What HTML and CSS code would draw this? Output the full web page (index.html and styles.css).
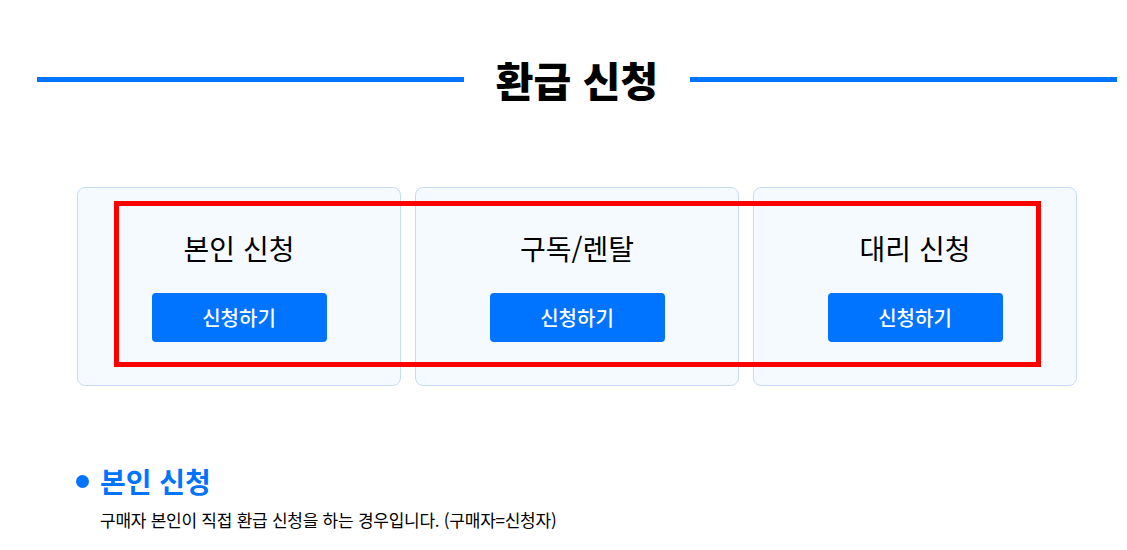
FILE: index.html
```html
<!DOCTYPE html>
<html lang="ko">
<head>
<meta charset="utf-8">
<title>환급 신청</title>
<link rel="stylesheet" href="styles.css">
</head>
<body>
<div class="page">
  <div class="title-row">
    <span class="title-line"></span>
    <h1 class="title">환급 신청</h1>
    <span class="title-line"></span>
  </div>

  <div class="cards">
    <div class="card">
      <div class="card-title">본인 신청</div>
      <button class="card-btn">신청하기</button>
    </div>
    <div class="card">
      <div class="card-title">구독/렌탈</div>
      <button class="card-btn">신청하기</button>
    </div>
    <div class="card">
      <div class="card-title">대리 신청</div>
      <button class="card-btn">신청하기</button>
    </div>
    <div class="highlight"></div>
  </div>

  <div class="section">
    <h2 class="section-title"><span class="dot"></span>본인 신청</h2>
    <p class="section-desc">구매자 본인이 직접 환급 신청을 하는 경우입니다. (구매자=신청자)</p>
  </div>
</div>
</body>
</html>
```

FILE: styles.css
```css
* { box-sizing: border-box; }
html, body { margin: 0; padding: 0; background: #ffffff; }
body {
  font-family: "Noto Sans CJK KR", "Noto Sans", sans-serif;
  color: #000;
}
.page {
  width: 1080px;
  margin-left: 37px;
  padding-top: 56px;
}
.title-row {
  display: flex;
  align-items: center;
  height: 46px;
}
.title-line {
  flex: 1;
  height: 5px;
  background: #0073ff;
}
.title {
  margin: 0;
  padding: 0 32px;
  font-size: 41px;
  line-height: 46px;
  font-weight: 900;
  color: #000;
}
.cards {
  position: relative;
  width: 1000px;
  margin: 85px auto 0;
  display: grid;
  grid-template-columns: repeat(3, 1fr);
  gap: 14px;
}
.card {
  display: flex;
  flex-direction: column;
  align-items: center;
  height: 199px;
  padding-top: 42px;
  background: #f4faff;
  border: 1px solid #c5dcf7;
  border-radius: 8px;
}
.card-title {
  font-size: 28px;
  line-height: 36px;
  font-weight: 400;
}
.card-btn {
  margin-top: 27px;
  width: 175px;
  height: 49px;
  border: 0;
  border-radius: 4px;
  background: #0073ff;
  color: #fff;
  font-family: inherit;
  font-size: 20px;
  font-weight: 500;
  padding: 0;
}
.highlight {
  position: absolute;
  left: 37px;
  top: 14px;
  width: 927px;
  height: 166px;
  border: 5px solid #ff0000;
  pointer-events: none;
}
.section {
  margin-top: 77px;
  padding-left: 39px;
}
.section-title {
  display: flex;
  align-items: center;
  gap: 11px;
  margin: 0;
  font-size: 28px;
  line-height: 36px;
  font-weight: 700;
  color: #0073ff;
}
.dot {
  width: 13px;
  height: 13px;
  border-radius: 50%;
  background: #0073ff;
}
.section-desc {
  margin: 9px 0 0 24px;
  font-size: 17px;
  line-height: 24px;
  letter-spacing: -0.25px;
}
```
